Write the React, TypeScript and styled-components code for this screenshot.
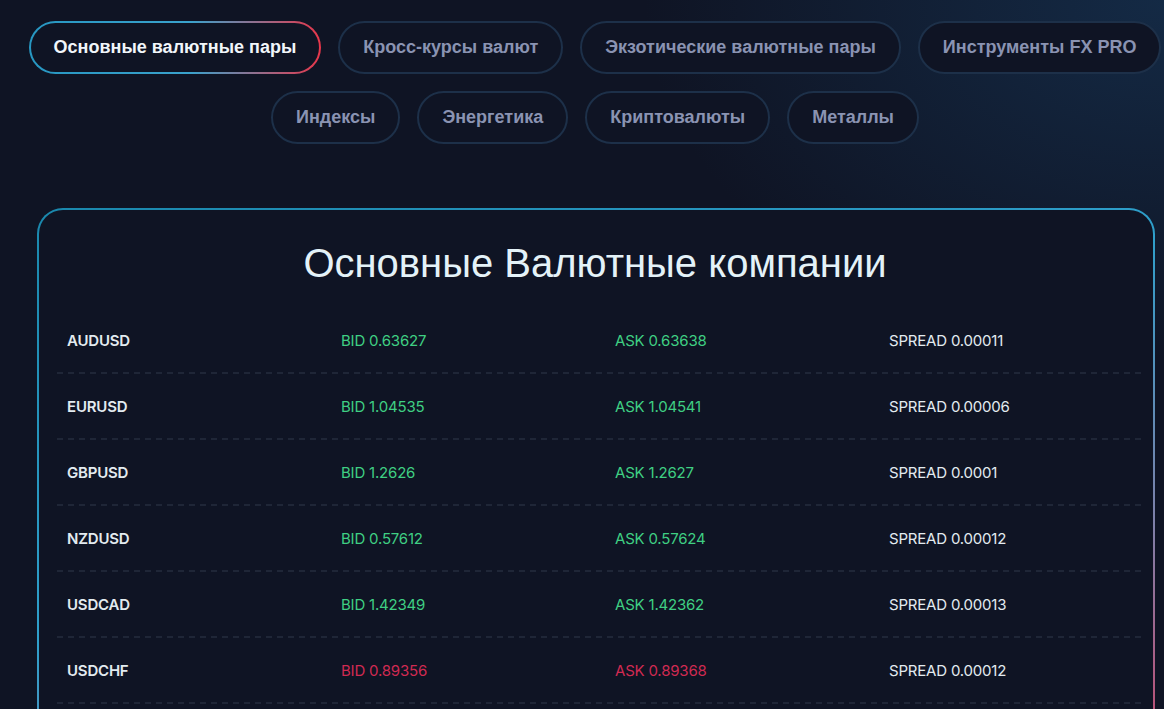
import React, { useState } from "react";
import styled, { createGlobalStyle } from "styled-components";

const GlobalStyle = createGlobalStyle`
  html, body {
    margin: 0;
    padding: 0;
    background: #0f1424;
  }
  body {
    font-family: "Liberation Sans", Arial, sans-serif;
    overflow: hidden;
  }
`;

const Page = styled.div`
  height: 709px;
  width: 1164px;
  box-sizing: border-box;
  padding: 21px 2px 0 28px;
  overflow: hidden;
  background:
    radial-gradient(ellipse 520px 360px at 100% 0%, rgba(24, 60, 96, 0.55), rgba(15, 20, 36, 0) 100%),
    #0f1424;
`;

const Tabs = styled.div`
  display: flex;
  flex-wrap: wrap;
  justify-content: center;
  gap: 17px 17px;
`;

const Tab = styled.button<{ $active?: boolean }>`
  height: 53px;
  box-sizing: border-box;
  padding: 0 23px;
  border-radius: 27px;
  font-family: "Liberation Sans", Arial, sans-serif;
  font-weight: 700;
  font-size: 18px;
  cursor: pointer;
  color: ${(p) => (p.$active ? "#f1f6fa" : "#8a93b2")};
  border: 2px solid ${(p) => (p.$active ? "transparent" : "#1d3049")};
  background: ${(p) =>
    p.$active
      ? "linear-gradient(#0f1424, #0f1424) padding-box, linear-gradient(90deg, #2797c2 0%, #3aa2cc 55%, #9a6a88 80%, #e8364a 100%) border-box"
      : "#0f1424"};
`;

const Card = styled.section`
  margin: 64px 7px 0 9px;
  height: 560px;
  box-sizing: border-box;
  border-radius: 26px;
  border: 2px solid transparent;
  background:
    linear-gradient(#0f1424, #0f1424) padding-box,
    linear-gradient(160deg, #1a88ad 0%, #2f9fcb 45%, #7f7fa8 75%, #c9456a 100%) border-box;
  padding: 0 10px 0 18px;
`;

const Title = styled.h2`
  margin: 0;
  padding: 30px 10px 21px 0;
  text-align: center;
  font-family: "Liberation Sans", Arial, sans-serif;
  font-weight: 400;
  font-size: 40px;
  line-height: 46px;
  color: #e4f2f8;
`;

const Row = styled.div`
  display: grid;
  grid-template-columns: 274px 274px 274px 264px;
  height: 66px;
  align-items: center;
  position: relative;
  &::after {
    content: "";
    position: absolute;
    left: 0;
    right: 0;
    bottom: -1px;
    height: 2px;
    background: repeating-linear-gradient(90deg, #1f2637 0 6px, transparent 6px 11px);
  }
`;

const Cell = styled.div<{ $tone?: "pair" | "up" | "down" | "plain" }>`
  padding-left: 10px;
  font-family: Inter, "Noto Sans", sans-serif;
  font-size: 15px;
  letter-spacing: -0.2px;
  font-weight: ${(p) => (p.$tone === "pair" ? 600 : 400)};
  color: ${(p) =>
    p.$tone === "up"
      ? "#3fcf83"
      : p.$tone === "down"
      ? "#d12a52"
      : "#e3ebf0"};
`;

type Quote = { pair: string; bid: string; ask: string; spread: string; up: boolean };

const quotes: Quote[] = [
  { pair: "AUDUSD", bid: "0.63627", ask: "0.63638", spread: "0.00011", up: true },
  { pair: "EURUSD", bid: "1.04535", ask: "1.04541", spread: "0.00006", up: true },
  { pair: "GBPUSD", bid: "1.2626", ask: "1.2627", spread: "0.0001", up: true },
  { pair: "NZDUSD", bid: "0.57612", ask: "0.57624", spread: "0.00012", up: true },
  { pair: "USDCAD", bid: "1.42349", ask: "1.42362", spread: "0.00013", up: true },
  { pair: "USDCHF", bid: "0.89356", ask: "0.89368", spread: "0.00012", up: false },
];

const tabs = [
  "Основные валютные пары",
  "Кросс-курсы валют",
  "Экзотические валютные пары",
  "Инструменты FX PRO",
  "Индексы",
  "Энергетика",
  "Криптовалюты",
  "Металлы",
];

const App: React.FC = () => {
  const [active, setActive] = useState(0);
  return (
    <>
      <GlobalStyle />
      <Page>
        <Tabs>
          {tabs.map((t, i) => (
            <Tab key={t} $active={i === active} onClick={() => setActive(i)}>
              {t}
            </Tab>
          ))}
        </Tabs>
        <Card>
          <Title>Основные Валютные компании</Title>
          {quotes.map((q) => (
            <Row key={q.pair}>
              <Cell $tone="pair">{q.pair}</Cell>
              <Cell $tone={q.up ? "up" : "down"}>BID {q.bid}</Cell>
              <Cell $tone={q.up ? "up" : "down"}>ASK {q.ask}</Cell>
              <Cell $tone="plain">SPREAD {q.spread}</Cell>
            </Row>
          ))}
        </Card>
      </Page>
    </>
  );
};

export default App;
